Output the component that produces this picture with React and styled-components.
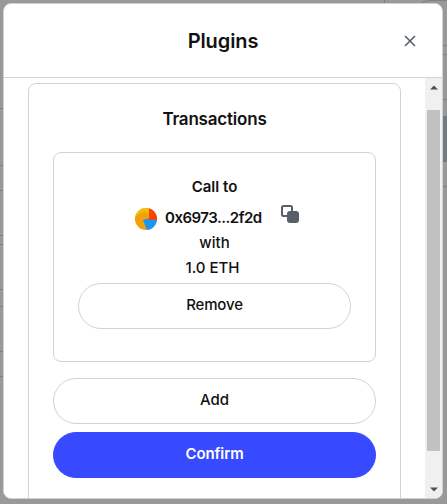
import React from 'react';
import styled, { createGlobalStyle } from 'styled-components';

const line = '#d0d2d7';

const Global = createGlobalStyle`
  * { box-sizing: border-box; }
  body { margin: 0; overflow: hidden; font-family: Inter, "Liberation Sans", sans-serif; color: #111; }
  button { font-family: inherit; color: inherit; }
`;

const Backdrop = styled.div`
  height: 504px;
  width: 447px;
  background-color: #999;
  padding: 3px 4px 5px 3px;
  display: grid;
  background-repeat: no-repeat;
  background-image: ${({ $rules }) =>
    $rules.map(([c]) => `linear-gradient(${c}, ${c})`).join(',')};
  background-position: ${({ $rules }) => $rules.map(([, x, y]) => `${x}px ${y}px`).join(',')};
  background-size: ${({ $rules }) => $rules.map(([, , , w, h]) => `${w}px ${h}px`).join(',')};
`;

const rules = [
  ...[108, 165, 190, 235, 244, 289, 306, 351, 376].map((y) => ['#7d7f82', 0, y, 4, 1]),
  ...[45, 54, 99, 186].map((y) => ['#7d7f82', 442, y, 5, 1]),
  ['#737b80', 442, 116, 5, 46],
  ['#7d7f82', 384, 0, 1, 4],
  ['#7d7f82', 427, 0, 20, 1],
  ['#7d7f82', 423, 1, 4, 1],
  ['#7d7f82', 421, 2, 2, 1],
];

const Dialog = styled.section`
  background: #fff;
  border: 1px solid ${line};
  border-radius: 8px;
  overflow: hidden;
  display: grid;
  grid-template-rows: 74px 1fr;
`;

const Header = styled.header`
  border-bottom: 1px solid ${line};
  display: grid;
  grid-template-columns: 64px 1fr 64px;
  align-items: center;
  justify-items: center;
`;

const Label = styled.span`
  display: block;
  white-space: nowrap;
  font-size: ${({ $size = 15 }) => $size}px;
  font-weight: ${({ $weight = 500 }) => $weight};
  letter-spacing: ${({ $track = 0 }) => $track}px;
  line-height: 25px;
`;

const Title = styled(Label).attrs({ as: 'h1' })`
  grid-column: 2;
  margin: 0;
  padding-top: 2px;
`;

const Close = styled.button`
  border: 0;
  padding: 0;
  background: none;
  display: flex;
  svg { display: block; }
`;

const Body = styled.div`
  display: grid;
  grid-template-columns: 1fr 17px;
  min-height: 0;
`;

const Viewport = styled.div`
  overflow: hidden;
  padding: 5px 24px 0;
`;

const Panel = styled.div`
  height: 460px;
  border: 1px solid ${line};
  border-radius: 8px;
  padding: 23px 24px 24px;
  display: flex;
  flex-direction: column;
  align-items: stretch;
`;

const Heading = styled(Label).attrs({ as: 'h2' })`
  margin: 0 0 20px;
  text-align: center;
`;

const Card = styled.div`
  height: 210px;
  border: 1px solid ${line};
  border-radius: 8px;
  padding: 21px 24px 0;
  display: flex;
  flex-direction: column;
  align-items: center;
  margin-bottom: 16px;
`;

const Address = styled.div`
  height: 30px;
  width: 164px;
  margin: 1px 0 0 5px;
  padding-top: 2px;
  display: grid;
  grid-template-columns: 22px 8px 1fr 18px;
  align-items: center;
`;

const Avatar = styled.svg`
  display: block;
  margin-top: 5px;
`;

const AddressText = styled(Label)`
  grid-column: 3;
  margin-top: 3px;
`;

const CopyIcon = styled.svg`
  display: block;
  margin-top: -4px;
`;

const Amount = styled(Label)`
  padding-right: 4px;
  margin-bottom: 3px;
`;

const Button = styled.button`
  width: 100%;
  height: 46px;
  flex: none;
  border-radius: 23px;
  padding: 0 0 4px;
  border: 1px solid ${({ $primary }) => ($primary ? '#384aff' : line)};
  background: ${({ $primary }) => ($primary ? '#384aff' : '#fff')};
  color: ${({ $primary }) => ($primary ? '#fff' : '#111')};
  & + & { margin-top: 8px; }
`;

const ScrollTrack = styled.div`
  background: #f0f0f0;
  display: grid;
  grid-template-rows: 32px 341px 1fr;
  justify-items: center;
`;

const ScrollThumb = styled.div`
  width: 13px;
  background: #c1c1c1;
`;

const Arrow = styled.svg`
  display: block;
  margin-top: ${({ $top }) => $top}px;
`;

export default function App() {
  return (
    <>
      <Global />
      <Backdrop $rules={rules}>
        <Dialog>
          <Header>
            <Title $size={20} $weight={600} $track={-0.1}>Plugins</Title>
            <Close aria-label="Close">
              <svg width="12" height="12" viewBox="0 0 12 12" fill="none" stroke="#57606a" strokeWidth="1.6">
                <path d="M1 1L11 11M11 1L1 11" />
              </svg>
            </Close>
          </Header>
          <Body>
            <Viewport>
              <Panel>
                <Heading $size={17} $weight={600} $track={-0.2}>Transactions</Heading>
                <Card>
                  <Label $weight={600}>Call to</Label>
                  <Address>
                    <Avatar width="22" height="22" viewBox="0 0 22 22">
                      <clipPath id="disc"><circle cx="11" cy="11" r="11" /></clipPath>
                      <g clipPath="url(#disc)">
                        <rect width="22" height="22" fill="#f3a00a" />
                        <path d="M0 9L0 0H14V6L9 3L4 6Z" fill="#f2be0a" />
                        <path d="M8 12L22 8V22H12Z" fill="#1897f2" />
                        <path d="M14 0H22V12H14Z" fill="#fa4300" />
                      </g>
                    </Avatar>
                    <AddressText $weight={600} $track={-0.5}>0x6973...2f2d</AddressText>
                    <CopyIcon width="18" height="18" viewBox="0 0 18 18">
                      <rect x="1" y="1" width="10" height="10" rx="1.5" fill="none" stroke="#57606a" strokeWidth="2" />
                      <rect x="6" y="6" width="12" height="12" rx="3" fill="#57606a" />
                    </CopyIcon>
                  </Address>
                  <Label>with</Label>
                  <Amount>1.0 ETH</Amount>
                  <Button><Label $track={-0.15}>Remove</Label></Button>
                </Card>
                <Button><Label>Add</Label></Button>
                <Button $primary><Label $weight={600} $track={-0.1}>Confirm</Label></Button>
              </Panel>
            </Viewport>
            <ScrollTrack>
              <Arrow $top={7} width="8" height="5" viewBox="0 0 8 5"><path d="M0 4.5L4 0.5L8 4.5Z" fill="#505050" /></Arrow>
              <ScrollThumb />
              <Arrow $top={36} width="8" height="5" viewBox="0 0 8 5"><path d="M0 0.5L4 4.5L8 0.5Z" fill="#505050" /></Arrow>
            </ScrollTrack>
          </Body>
        </Dialog>
      </Backdrop>
    </>
  );
}
